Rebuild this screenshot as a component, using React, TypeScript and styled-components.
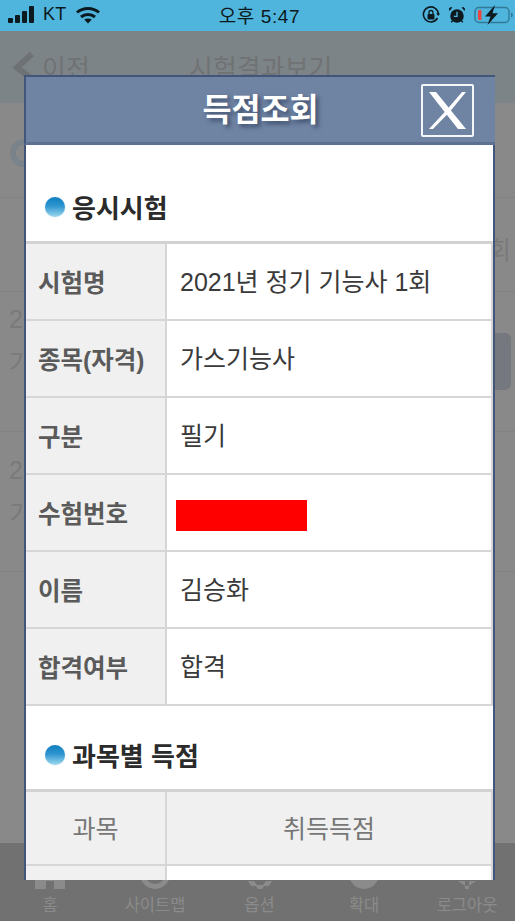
import React from 'react';
import styled, { createGlobalStyle } from 'styled-components';

const GlobalStyle = createGlobalStyle`
    html, body {
        margin: 0;
        padding: 0;
        background: #898989;
    }
    body {
        font-family: "Liberation Sans", "Noto Sans CJK KR", sans-serif;
    }
`;

const Screen = styled.div`
    position: relative;
    width: 515px;
    height: 921px;
    display: flex;
    flex-direction: column;
    overflow: hidden;
`;

const StatusBar = styled.div`
    height: 31px;
    flex: none;
    box-sizing: border-box;
    background: #50b5dc;
    display: grid;
    grid-template-columns: 1fr auto 1fr;
    align-items: center;
    padding: 0 2px 2px 8px;
    color: #0c1a20;
`;

const StatusLeft = styled.div`
    display: flex;
    align-items: center;
    font-size: 18px;
    letter-spacing: 0.3px;
`;

const Carrier = styled.span`
    margin: 0 9px 0 7px;
`;

const Clock = styled.div`
    font-size: 19px;
    letter-spacing: 0.6px;
    margin-left: -2px;
`;

const StatusRight = styled.div`
    display: flex;
    justify-content: flex-end;
    align-items: center;
    gap: 8px;
`;

const TopBar = styled.div`
    height: 72px;
    flex: none;
    box-sizing: border-box;
    background: #7d8487;
    display: grid;
    grid-template-columns: 177px auto;
    align-items: start;
    padding: 17px 0 0 12px;
    color: #707274;
    font-size: 26px;
`;

const BackLink = styled.div`
    display: flex;
    align-items: center;
    gap: 6px;
`;

const Body = styled.div`
    flex: 1;
    background: #898989;
    display: flex;
    flex-direction: column;
`;

const ListRow = styled.div<{ $height: number }>`
    height: ${props => props.$height}px;
    flex: none;
    box-sizing: border-box;
    border-bottom: 1px solid #828282;
    display: flex;
    justify-content: space-between;
    color: #7a7a7a;
`;

const Avatar = styled.div`
    width: 16px;
    height: 16px;
    margin: 36px 0 0 10px;
    border: 6px solid #7a8389;
    border-radius: 50%;
`;

const RowTail = styled.div`
    font-size: 25px;
    margin: 32px 4px 0 0;
`;

const RowLead = styled.div<{ $top: number }>`
    padding: ${props => props.$top}px 0 0 9px;
    font-size: 25px;
    line-height: 44px;
`;

const ResultButton = styled.div`
    width: 60px;
    height: 57px;
    margin: 41px 4px 0 0;
    border-radius: 6px;
    background: #75787f;
`;

const Footer = styled.div`
    height: 78px;
    flex: none;
    background: #717171;
    display: grid;
    grid-template-columns: 100px 110px 99px 110px 96px;
    color: #8b8b8b;
    font-size: 16.5px;
`;

const FooterItem = styled.div`
    display: flex;
    flex-direction: column;
    align-items: center;
    justify-content: flex-end;
    gap: 7px;
    padding-bottom: 7px;
    line-height: 18px;
`;

const Modal = styled.div`
    position: absolute;
    left: 24px;
    top: 75px;
    width: 471px;
    height: 805px;
    display: flex;
    flex-direction: column;
    overflow: hidden;
`;

const ModalHeader = styled.div`
    position: relative;
    height: 70px;
    flex: none;
    box-sizing: border-box;
    background: #6f83a3;
    border-top: 2px solid #42557a;
    border-left: 2px solid #42557a;
    border-bottom: 3px solid #5d7092;
    padding-bottom: 5px;
    display: flex;
    align-items: center;
    justify-content: center;
`;

const ModalTitle = styled.h1`
    margin: 0;
    color: #fff;
    font-size: 31.5px;
    font-weight: 700;
    text-shadow: 3px 3px 4px #3f4f6d;
`;

const CloseButton = styled.button`
    position: absolute;
    right: 21px;
    top: 7px;
    width: 53px;
    height: 53px;
    padding: 0;
    background: transparent;
    border: 2px solid #f4f6f9;
    border-radius: 2px;
    display: flex;
    align-items: center;
    justify-content: center;
`;

const ModalBody = styled.div`
    flex: 1;
    background: #fff;
    border-left: 2px solid #42557a;
    border-right: 2px solid #42557a;
    min-height: 0;
`;

const SectionTitle = styled.h2<{ $height: number }>`
    height: ${props => props.$height}px;
    margin: 0;
    box-sizing: border-box;
    padding: 0 0 16px 19px;
    display: flex;
    align-items: flex-end;
    gap: 7px;
    color: #2b2b2b;
    font-size: 26px;
    line-height: 31px;
    font-weight: 700;
`;

const Bullet = styled.span`
    width: 20px;
    height: 20px;
    margin-bottom: 8px;
    border-radius: 50%;
    background: linear-gradient(#0f7fc0 0%, #2e95d0 45%, #9fd9ef 100%);
    box-shadow: 0 0 1px #7fb6d2;
`;

const InfoTable = styled.div`
    border-top: 3px solid #d2d2d2;
    border-right: 2px solid #d6d6d6;
`;

const Row = styled.div<{ $height?: number }>`
    display: grid;
    grid-template-columns: 141px 1fr;
    height: ${props => props.$height ?? 77}px;
    box-sizing: border-box;
    border-bottom: 2px solid #d6d6d6;
`;

const HeadCell = styled.div`
    background: #f0f0f0;
    border-right: 2px solid #d6d6d6;
    display: flex;
    align-items: center;
    padding-left: 12px;
    color: #5a5a5a;
    font-size: 24.5px;
    font-weight: 700;
`;

const ValueCell = styled.div`
    display: flex;
    align-items: center;
    padding: 0 0 3px 13px;
    color: #3a3a3a;
    font-size: 25px;
`;

const ColumnHead = styled.div<{ $divided?: boolean }>`
    background: #f0f0f0;
    border-right: ${props => (props.$divided ? '2px solid #d6d6d6' : 'none')};
    display: flex;
    align-items: center;
    justify-content: center;
    padding-bottom: 2px;
    color: #777;
    font-size: 25px;
`;

const BlankHead = styled.div`
    background: #f0f0f0;
    border-right: 2px solid #d6d6d6;
`;

const Redaction = styled.div`
    width: 131px;
    height: 31px;
    margin: 9px 0 0 -4px;
    background: #f00;
`;

const examInfo = [
    { label: '시험명', value: '2021년 정기 기능사 1회' },
    { label: '종목(자격)', value: '가스기능사' },
    { label: '구분', value: '필기' },
    { label: '수험번호', value: null },
    { label: '이름', value: '김승화' },
    { label: '합격여부', value: '합격' },
];

const SignalIcon = () => (
    <svg width="28" height="18" viewBox="0 0 28 18" fill="#0c1a20">
        <rect x="0" y="12" width="5" height="5" rx="1" />
        <rect x="7" y="9" width="5" height="8" rx="1" />
        <rect x="14" y="5" width="5" height="12" rx="1" />
        <rect x="21" y="0" width="5" height="17" rx="1" />
    </svg>
);

const WifiIcon = () => (
    <svg width="24" height="18" viewBox="0 0 24 18" fill="none" stroke="#0c1a20" strokeWidth="3">
        <path d="M1 6.5C7 1 17 1 23 6.5" />
        <path d="M5 11C9 7.5 15 7.5 19 11" />
        <path d="M12 17.5L8.2 13.6C10.4 12 13.6 12 15.8 13.6Z" fill="#0c1a20" stroke="none" />
    </svg>
);

const RotationIcon = () => (
    <svg width="18" height="18" viewBox="0 0 18 18" fill="none" stroke="#0c1a20">
        <path d="M15.5 12A7.5 7.5 0 1 1 16.4 8" strokeWidth="1.6" />
        <path d="M14 7.5H18L16.3 10Z" fill="#0c1a20" stroke="none" />
        <rect x="5.5" y="8" width="7" height="5.5" rx="1" fill="#0c1a20" stroke="none" />
        <path d="M7 8.5V6.5a2 2 0 0 1 4 0V8.5" strokeWidth="1.3" />
    </svg>
);

const AlarmIcon = () => (
    <svg width="18" height="20" viewBox="0 0 20 20" fill="#0c1a20">
        <circle cx="10" cy="11" r="7.5" />
        <path d="M1.5 5.5L5 1.8 2.8 1.2 1 3Z" />
        <path d="M18.5 5.5L15 1.8 17.2 1.2 19 3Z" />
        <path d="M3.5 18L5.5 16M16.5 18L14.5 16" stroke="#0c1a20" strokeWidth="1.6" />
        <path d="M10 6.5V11.5H6.5" fill="none" stroke="#50b5dc" strokeWidth="1.5" />
    </svg>
);

const BatteryIcon = () => (
    <svg width="39" height="20" viewBox="0 0 39 20" fill="none">
        <rect x="1" y="2.5" width="34" height="15" rx="4" stroke="#2f7896" strokeWidth="1.4" />
        <rect x="4" y="5" width="3.5" height="10" rx="1" fill="#e8483f" />
        <path d="M37 7.5C38.4 8 38.8 9 38.8 10S38.4 12 37 12.5Z" fill="#2f7896" />
        <path d="M21 0L11 11.5H16.5L13.5 20L24 8.2H18.5Z" fill="#0c1a20" />
    </svg>
);

const BackChevron = () => (
    <svg width="24" height="32" viewBox="0 0 24 32" fill="none" stroke="#6f7274" strokeWidth="6">
        <path d="M20 3L5 16.5L20 28" />
    </svg>
);

const CloseIcon = () => (
    <svg width="43" height="43" viewBox="0 0 43 43" fill="#fff">
        <path d="M3 3H10L40 40H32Z" />
        <path d="M36 3H40L24 22.5 7 40H3L21 20.5Z" />
    </svg>
);

const HomeIcon = () => (
    <svg width="30" height="30" viewBox="0 0 30 30" fill="#8b8b8b">
        <path d="M15 2L30 14V30H19V22H11V30H0V14Z" />
    </svg>
);

const SitemapIcon = () => (
    <svg width="30" height="30" viewBox="0 0 30 30" fill="none" stroke="#8b8b8b" strokeWidth="5">
        <circle cx="15" cy="15" r="12.5" />
    </svg>
);

const OptionIcon = () => (
    <svg width="30" height="30" viewBox="0 0 30 30" fill="#8b8b8b">
        <path d="M3 22L9 22 12 26 18 26 21 22 27 22 24 27 19 27 17 30 13 30 11 27 6 27Z" />
    </svg>
);

const ZoomIcon = () => (
    <svg width="30" height="30" viewBox="0 0 30 30" fill="#8b8b8b">
        <circle cx="15" cy="15" r="15" />
    </svg>
);

const LogoutIcon = () => (
    <svg width="30" height="30" viewBox="0 0 30 30" fill="#8b8b8b">
        <path d="M6 22H13V30H17V22H24L17 27H13Z" />
    </svg>
);

const footerItems = [
    { label: '홈', Icon: HomeIcon },
    { label: '사이트맵', Icon: SitemapIcon },
    { label: '옵션', Icon: OptionIcon },
    { label: '확대', Icon: ZoomIcon },
    { label: '로그아웃', Icon: LogoutIcon },
];

const App: React.FC = () => {
    return (
        <Screen>
            <GlobalStyle />
            <StatusBar>
                <StatusLeft>
                    <SignalIcon />
                    <Carrier>KT</Carrier>
                    <WifiIcon />
                </StatusLeft>
                <Clock>오후 5:47</Clock>
                <StatusRight>
                    <RotationIcon />
                    <AlarmIcon />
                    <BatteryIcon />
                </StatusRight>
            </StatusBar>
            <TopBar>
                <BackLink>
                    <BackChevron />
                    <span>이전</span>
                </BackLink>
                <span>시험결과보기</span>
            </TopBar>
            <Body>
                <ListRow $height={95}>
                    <Avatar />
                </ListRow>
                <ListRow $height={94}>
                    <span />
                    <RowTail>회</RowTail>
                </ListRow>
                <ListRow $height={140}>
                    <RowLead $top={5}>
                        2<br />가
                    </RowLead>
                    <ResultButton />
                </ListRow>
                <ListRow $height={140}>
                    <RowLead $top={16}>
                        2<br />가
                    </RowLead>
                </ListRow>
            </Body>
            <Footer>
                {footerItems.map(({ label, Icon }) => (
                    <FooterItem key={label}>
                        <Icon />
                        {label}
                    </FooterItem>
                ))}
            </Footer>
            <Modal>
                <ModalHeader>
                    <ModalTitle>득점조회</ModalTitle>
                    <CloseButton aria-label="닫기">
                        <CloseIcon />
                    </CloseButton>
                </ModalHeader>
                <ModalBody>
                    <SectionTitle $height={96}>
                        <Bullet />
                        응시시험
                    </SectionTitle>
                    <InfoTable>
                        {examInfo.map(row => (
                            <Row key={row.label}>
                                <HeadCell>{row.label}</HeadCell>
                                <ValueCell>{row.value ?? <Redaction />}</ValueCell>
                            </Row>
                        ))}
                    </InfoTable>
                    <SectionTitle $height={83}>
                        <Bullet />
                        과목별 득점
                    </SectionTitle>
                    <InfoTable>
                        <Row $height={74}>
                            <ColumnHead $divided>과목</ColumnHead>
                            <ColumnHead>취득득점</ColumnHead>
                        </Row>
                        <Row>
                            <BlankHead />
                            <ValueCell />
                        </Row>
                    </InfoTable>
                </ModalBody>
            </Modal>
        </Screen>
    );
};

export default App;
